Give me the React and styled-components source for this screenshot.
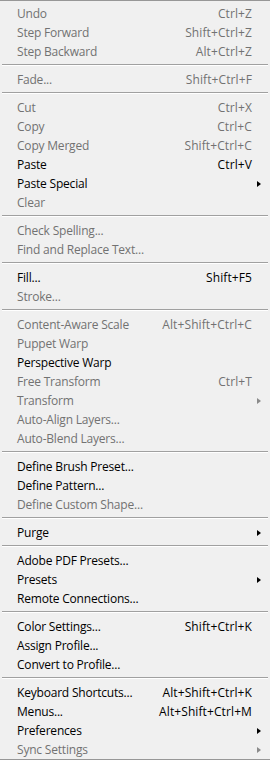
import React from "react";
import styled, { createGlobalStyle } from "styled-components";

const GlobalStyle = createGlobalStyle`
    html, body {
        margin: 0;
        padding: 0;
        background: #fff;
    }
`;

const Menu = styled.div`
    width: 270px;
    box-sizing: border-box;
    background-color: #f0f0f0;
    border-top: 1px solid #979797;
    border-bottom: 1px solid #979797;
    padding-top: 3px;
    font-family: "Open Sans", "Noto Sans", sans-serif;
    font-size: 12px;
`;

const Row = styled.div`
    display: grid;
    grid-template-columns: 1fr auto 18px;
    align-items: center;
    height: 19px;
    padding-left: 17px;
    color: ${(props) => (props.disabled ? "#727272" : "#000")};
    white-space: nowrap;
`;

const Label = styled.span`
    letter-spacing: -0.2px;
`;

const Shortcut = styled.span`
    text-align: right;
    letter-spacing: 0.1px;
`;

const Arrow = styled.span`
    display: flex;
    justify-content: flex-start;
    padding-left: 5px;

    &::before {
        content: "";
        display: ${(props) => (props.show ? "block" : "none")};
        width: 0;
        height: 0;
        border-top: 3.5px solid transparent;
        border-bottom: 3.5px solid transparent;
        border-left: 4px solid ${(props) => (props.disabled ? "#8a8a8a" : "#000")};
    }
`;

const Separator = styled.div`
    height: 9px;
    box-sizing: border-box;
    padding: 3px 2px 0;

    &::before {
        content: "";
        display: block;
        height: 1px;
        background: #a0a0a0;
        border-bottom: 1px solid #fff;
    }
`;

const groups = [
    [
        { label: "Undo", key: "Ctrl+Z", off: true },
        { label: "Step Forward", key: "Shift+Ctrl+Z", off: true },
        { label: "Step Backward", key: "Alt+Ctrl+Z", off: true },
    ],
    [{ label: "Fade...", key: "Shift+Ctrl+F", off: true }],
    [
        { label: "Cut", key: "Ctrl+X", off: true },
        { label: "Copy", key: "Ctrl+C", off: true },
        { label: "Copy Merged", key: "Shift+Ctrl+C", off: true },
        { label: "Paste", key: "Ctrl+V" },
        { label: "Paste Special", sub: true },
        { label: "Clear", off: true },
    ],
    [
        { label: "Check Spelling...", off: true },
        { label: "Find and Replace Text...", off: true },
    ],
    [
        { label: "Fill...", key: "Shift+F5" },
        { label: "Stroke...", off: true },
    ],
    [
        { label: "Content-Aware Scale", key: "Alt+Shift+Ctrl+C", off: true },
        { label: "Puppet Warp", off: true },
        { label: "Perspective Warp" },
        { label: "Free Transform", key: "Ctrl+T", off: true },
        { label: "Transform", sub: true, off: true },
        { label: "Auto-Align Layers...", off: true },
        { label: "Auto-Blend Layers...", off: true },
    ],
    [
        { label: "Define Brush Preset..." },
        { label: "Define Pattern..." },
        { label: "Define Custom Shape...", off: true },
    ],
    [{ label: "Purge", sub: true }],
    [
        { label: "Adobe PDF Presets..." },
        { label: "Presets", sub: true },
        { label: "Remote Connections..." },
    ],
    [
        { label: "Color Settings...", key: "Shift+Ctrl+K" },
        { label: "Assign Profile..." },
        { label: "Convert to Profile..." },
    ],
    [
        { label: "Keyboard Shortcuts...", key: "Alt+Shift+Ctrl+K" },
        { label: "Menus...", key: "Alt+Shift+Ctrl+M" },
        { label: "Preferences", sub: true },
        { label: "Sync Settings", sub: true, off: true },
    ],
];

const App = () => {
    return (
        <>
            <GlobalStyle />
            <Menu>
                {groups.map((group, g) => (
                    <React.Fragment key={g}>
                        {g > 0 && <Separator />}
                        {group.map((item) => (
                            <Row key={item.label} disabled={item.off}>
                                <Label>{item.label}</Label>
                                <Shortcut>{item.key}</Shortcut>
                                <Arrow show={item.sub} disabled={item.off} />
                            </Row>
                        ))}
                    </React.Fragment>
                ))}
            </Menu>
        </>
    );
};

export default App;
